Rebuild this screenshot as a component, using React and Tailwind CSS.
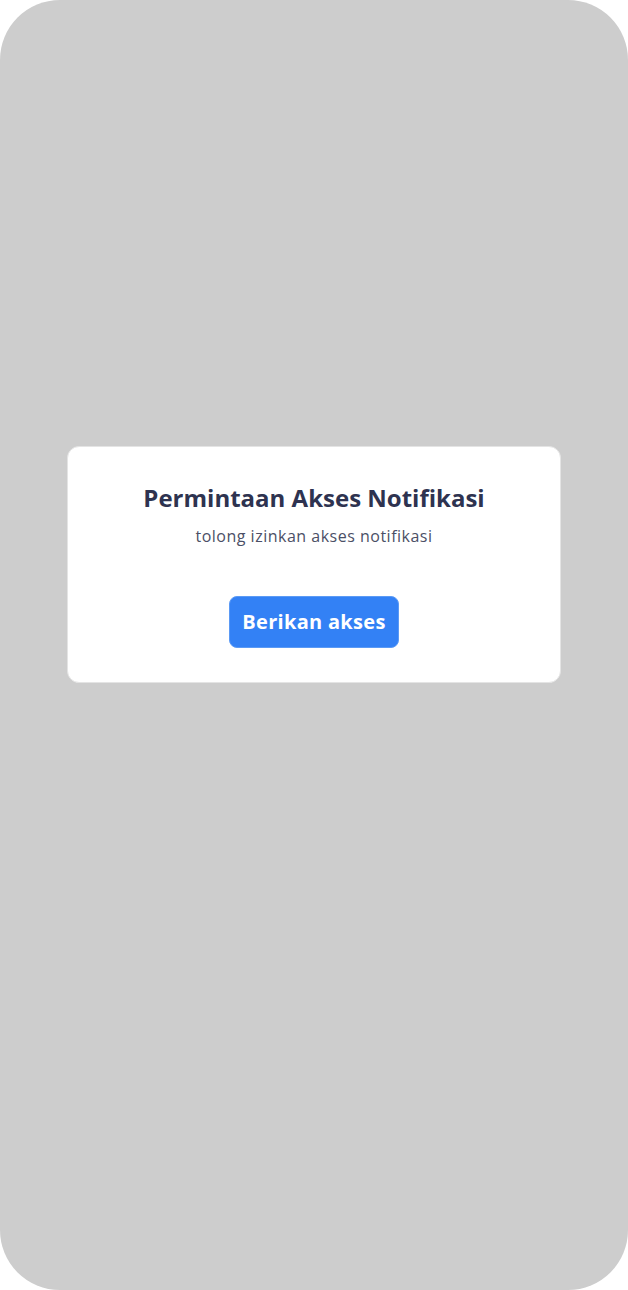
export default function App() {
  return (
    <div className="w-[628px] h-[1290px] bg-white" style={{ fontFamily: '"Open Sans", "Noto Sans", sans-serif' }}>
      <div className="w-full h-full bg-[#cdcdcd] rounded-[60px] flex flex-col items-center pt-[446px]">
        <div className="w-[494px] h-[237px] bg-white rounded-[12px] border border-[#e4e4e4] flex flex-col items-center pt-[36px]">
          <h1 className="text-[24px] font-bold leading-[30px] text-[#2e3350]">Permintaan Akses Notifikasi</h1>
          <p className="mt-[12px] text-[16px] leading-[22px] tracking-[0.5px] text-[#4b4f66]">tolong izinkan akses notifikasi</p>
          <button className="mt-[49px] w-[170px] h-[52px] rounded-[8px] bg-[#3381f5] border border-[#5b9af5] text-white text-[20px] tracking-[0.3px] font-bold">Berikan akses</button>
        </div>
      </div>
    </div>
  );
}
